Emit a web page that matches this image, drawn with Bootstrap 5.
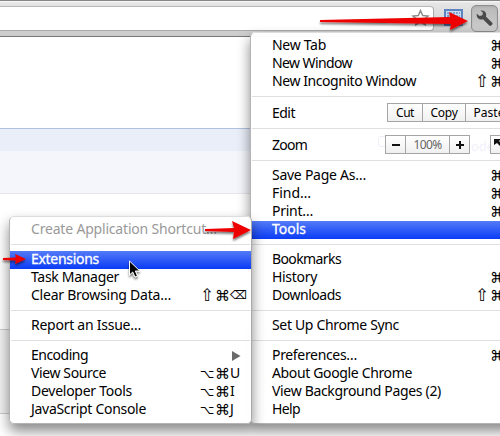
<!DOCTYPE html>
<html lang="en">
<head>
<meta charset="utf-8">
<title>Chrome menu</title>
<link href="https://cdn.jsdelivr.net/npm/bootstrap@5.3.0/dist/css/bootstrap.min.css" rel="stylesheet">
<style>
body{width:500px;height:436px;font:14px/16px "Noto Sans","Open Sans",sans-serif;color:#000;background:#fff}
.stage{width:500px;height:436px}
.toolbar{height:37px;border-top:1px solid #8a8688;border-bottom:1px solid #777;background:linear-gradient(#fafafa 0,#e5e5e5 2px,#cbcbcb 100%);padding-top:5px}
.omni{width:434px;height:25px;background:#fff;border:1px solid #aaa;border-top-color:#b8b8b8;border-left:0;border-radius:0 4px 4px 0}
.ext{width:19px;height:17px;margin:3px 0 0 10px}
.wrench{width:27px;height:27px;margin:-1px 0 0 8px;border:1px solid #8d8d8d;border-radius:5px;background:linear-gradient(#b9b9b9,#cdcdcd);box-shadow:inset 0 1px 2px #9996}
.band1{margin-top:91px;height:23px;border-top:1px solid #afc3df;background:#e9eef9}
.band2{height:43px;border-bottom:1px solid #e6e7ee;background:#f4f6fc}
.band3{margin-top:135px;height:85px;background:#f1f1f1;border-top:1px solid #ccc;border-bottom:1px solid #ccc}
.menu{background:#fffffffa;border:1px solid #b4b4b4;border-top-color:#ddd;box-shadow:0 7px 13px #0007}
.main-menu{left:250px;top:32px;width:270px;height:392px;padding-top:4px;border-radius:5px}
.sub-menu{left:9px;top:216px;width:243px;height:208px;padding-top:4px;border-radius:5px;border-right-color:#aaa}
.item{height:18px;padding-left:21px;white-space:nowrap}
.tall{height:20px;line-height:20px}
.sep{height:12px;padding:5px 1px 6px}
.sep::after{content:"";display:block;height:1px;background:#dfdfdf}
.hot{background:linear-gradient(#547bf7,#0a3cf5);color:#fff;-webkit-text-stroke:.3px #fff}
.dim{color:#999}
.keys{font:15px/18px "DejaVu Sans",sans-serif}
.keys b{font-weight:400;display:block;width:14px}
.keys .shift{font-size:17px;line-height:16px;width:15px;margin-left:-1px}
.keys .opt{font-size:12.5px;width:15px;margin-left:-1px}
.keys .del{font-size:12px;padding-left:1px;line-height:17px}
.main-menu .keys{width:43px}
.sub-menu .keys{width:50px}
.keys .letter{font:14px/16px "Noto Sans",sans-serif;padding-left:1px}
.cell{height:19px;border:1px solid #a5a5a5;background:linear-gradient(#fff,#f0f0f0);font-size:12px;line-height:17px;margin-right:-1px;flex:none}
.cut{width:36px}.copy{width:44px}.paste{width:48px}
.step{width:21px}.percent{width:45px;color:#666}.full{width:30px;margin-left:21px}
.edit-cells{left:136px;top:0}
.zoom-cells{left:134px;top:0}
.ghost{left:220px;top:1px;font-size:13px;color:#f1f1fb}
.ghost-box{left:127px;top:1px;width:11px;height:11px;border:1px solid #eeeefa;border-radius:3px}
.overlay{left:0;top:0;pointer-events:none}
</style>
<script src="https://cdn.jsdelivr.net/npm/bootstrap@5.3.0/dist/js/bootstrap.bundle.min.js"></script>
</head>
<body class="m-0 overflow-hidden">
<div class="stage position-relative overflow-hidden">
  <header class="toolbar d-flex align-items-start">
    <div class="omni d-flex justify-content-end">
      <svg width="24" height="22" viewBox="0 0 24 22"><path d="M11.500 3.500l2.200 5 5.300.5-4 3.600 1.200 5.200-4.700-2.800-4.700 2.800 1.200-5.200-4-3.600 5.300-.5z" fill="#fff" stroke="#8b8b8b" stroke-width="1.500"/></svg>
    </div>
    <svg class="ext" viewBox="0 0 19 17"><path d="M0 0h19v17H0z" fill="#5d84c2"/><path d="M2 2h15v12H2z" fill="#c9d9ef"/><path d="M3 4h13M3 7h13M3 11h13" stroke="#466fb4" stroke-dasharray="2 1"/></svg>
    <div class="wrench"><svg class="d-block" width="25" height="25" viewBox="0 0 25 25"><path d="M4.800 7.800L7.600 10l2.800-.7.500-2.800L8.500 4.700c3-.8 5.700 1 5.700 3.900 0 .8-.1 1.200-.3 1.800l6.300 6.300c.6.600.5 1.300 0 1.800l-1 1c-.6.600-1.300.5-1.900 0L11 13.300C8 14.300 4 12.300 4.800 7.800z" fill="#4a4a4a"/></svg></div>
  </header>
  <div class="band1"></div><div class="band2"></div><div class="band3"></div>

  <nav class="menu main-menu position-absolute">
    <div class="item d-flex justify-content-between"><span data-w="54">New Tab</span><span class="keys d-flex"><b></b><b>⌘</b></span></div>
    <div class="item d-flex justify-content-between"><span data-w="80">New Window</span><span class="keys d-flex"><b></b><b>⌘</b></span></div>
    <div class="item d-flex justify-content-between"><span data-w="144">New Incognito Window</span><span class="keys d-flex"><b class="shift">⇧</b><b>⌘</b></span></div>
    <div class="sep"></div>
    <div class="item tall position-relative"><span data-w="23">Edit</span>
      <div class="edit-cells position-absolute d-flex">
        <div class="cell cut text-center"><span data-w="18">Cut</span></div><div class="cell copy text-center"><span data-w="27">Copy</span></div><div class="cell paste text-center"><span data-w="31">Paste</span></div>
      </div>
    </div>
    <div class="sep"></div>
    <div class="item tall position-relative"><span data-w="35">Zoom</span>
      <span class="ghost-box position-absolute"></span><span class="ghost position-absolute">ode</span>
      <div class="zoom-cells position-absolute d-flex">
        <div class="cell step"><svg class="d-block" width="19" height="17"><path d="M6 9h8" stroke="#111" stroke-width="2"/></svg></div><div class="cell percent text-center"><span data-w="28">100%</span></div><div class="cell step"><svg class="d-block" width="19" height="17"><path d="M6 9h8M10 5v8" stroke="#111" stroke-width="2"/></svg></div>
        <div class="cell full"><svg class="d-block" width="24" height="17"><path d="M3 3h7L8 5l4 4-2 2-4-4-3 2z" fill="#111"/></svg></div>
      </div>
    </div>
    <div class="sep"></div>
    <div class="item d-flex justify-content-between"><span data-w="94">Save Page As…</span><span class="keys d-flex"><b></b><b>⌘</b></span></div>
    <div class="item d-flex justify-content-between"><span data-w="39">Find…</span><span class="keys d-flex"><b></b><b>⌘</b></span></div>
    <div class="item d-flex justify-content-between"><span data-w="41">Print…</span><span class="keys d-flex"><b></b><b>⌘</b></span></div>
    <div class="item hot"><span data-w="34">Tools</span></div>
    <div class="sep"></div>
    <div class="item"><span data-w="69">Bookmarks</span></div>
    <div class="item d-flex justify-content-between"><span data-w="45">History</span><span class="keys d-flex"><b></b><b>⌘</b></span></div>
    <div class="item d-flex justify-content-between"><span data-w="69">Downloads</span><span class="keys d-flex"><b class="shift">⇧</b><b>⌘</b></span></div>
    <div class="sep"></div>
    <div class="item"><span data-w="127">Set Up Chrome Sync</span></div>
    <div class="sep"></div>
    <div class="item d-flex justify-content-between"><span data-w="85">Preferences…</span><span class="keys d-flex"><b></b><b>⌘</b></span></div>
    <div class="item"><span data-w="140">About Google Chrome</span></div>
    <div class="item"><span data-w="169">View Background Pages (2)</span></div>
    <div class="item"><span data-w="28">Help</span></div>
  </nav>

  <nav class="menu sub-menu position-absolute">
    <div class="item dim"><span data-w="186">Create Application Shortcut…</span></div>
    <div class="sep"></div>
    <div class="item hot"><span data-w="68">Extensions</span></div>
    <div class="item"><span data-w="88">Task Manager</span></div>
    <div class="item d-flex justify-content-between"><span data-w="140">Clear Browsing Data…</span><span class="keys d-flex"><b class="shift">⇧</b><b>⌘</b><b class="del">⌫</b></span></div>
    <div class="sep"></div>
    <div class="item"><span data-w="110">Report an Issue…</span></div>
    <div class="sep"></div>
    <div class="item d-flex justify-content-between"><span data-w="57">Encoding</span><svg class="me-2" width="12" height="18"><path d="M1 4l8.500 5L1 14z" fill="#6b6b6b"/></svg></div>
    <div class="item d-flex justify-content-between"><span data-w="75">View Source</span><span class="keys d-flex"><b class="opt">⌥</b><b>⌘</b><b class="letter">U</b></span></div>
    <div class="item d-flex justify-content-between"><span data-w="101">Developer Tools</span><span class="keys d-flex"><b class="opt">⌥</b><b>⌘</b><b class="letter">I</b></span></div>
    <div class="item d-flex justify-content-between"><span data-w="115">JavaScript Console</span><span class="keys d-flex"><b class="opt">⌥</b><b>⌘</b><b class="letter">J</b></span></div>
  </nav>

  <svg class="overlay position-absolute" width="500" height="436">
    <defs><filter id="soft" x="-20%" y="-50%" width="140%" height="220%"><feDropShadow dx="0" dy="2" stdDeviation="1.300" flood-opacity=".55"/></filter></defs>
    <g fill="#ee0000" filter="url(#soft)">
      <path d="M320 20L450 17l-1-5 19 9-18 9 1-6-131-2z"/>
      <path d="M205 229l29-1-2-7 19 9-18 9 1-7-29-1z"/>
      <path d="M3 258l13-.5-1-3.500 11 5-11 5 1-3.500-13-.5z"/>
    </g>
    <path d="M129.500 261v14l3.200-3 2.300 5 2.500-1-2.200-5h4.500z" fill="#000" stroke="#fff" filter="url(#soft)"/>
  </svg>
</div>
<script>
document.querySelectorAll('[data-w]').forEach(function (el) {
  var n = el.textContent.length;
  var extra = (Number(el.dataset.w) - el.getBoundingClientRect().width) / n;
  el.style.letterSpacing = extra.toFixed(3) + 'px';
});
</script>
</body>
</html>
